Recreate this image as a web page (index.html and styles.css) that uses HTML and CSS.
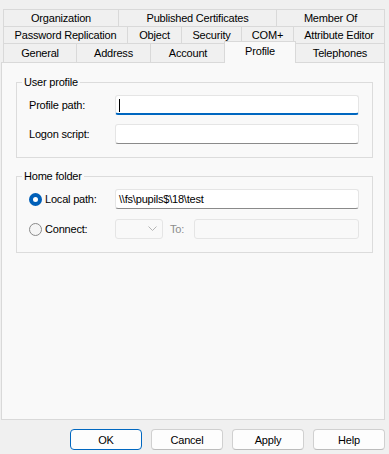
FILE: index.html
```html
<!DOCTYPE html>
<html lang="en">
<head>
    <meta charset="UTF-8">
    <title>Properties - Profile</title>
    <link rel="stylesheet" href="styles.css">
</head>
<body>
    <div class="dialog">
        <!-- Multi-row tab strip -->
        <div class="tabs">
            <div class="tab-row">
                <div class="tab tab-org">Organization</div>
                <div class="tab tab-certs">Published Certificates</div>
                <div class="tab tab-member last">Member Of</div>
            </div>
            <div class="tab-row">
                <div class="tab tab-password">Password Replication</div>
                <div class="tab tab-object">Object</div>
                <div class="tab tab-security">Security</div>
                <div class="tab tab-com">COM+</div>
                <div class="tab tab-attr last">Attribute Editor</div>
            </div>
            <div class="tab-row front">
                <div class="tab tab-general">General</div>
                <div class="tab tab-address">Address</div>
                <div class="tab tab-account">Account</div>
                <div class="tab tab-profile selected">Profile</div>
                <div class="tab tab-phones last">Telephones</div>
            </div>
        </div>

        <!-- Tab page -->
        <div class="panel">
            <fieldset class="group">
                <legend>User profile</legend>
                <div class="field-row">
                    <label class="field-label">Profile path:</label>
                    <div class="textbox focused"><span class="caret"></span></div>
                </div>
                <div class="field-row">
                    <label class="field-label">Logon script:</label>
                    <div class="textbox"></div>
                </div>
            </fieldset>

            <fieldset class="group home">
                <legend>Home folder</legend>
                <div class="field-row">
                    <label class="field-label radio-label">
                        <span class="radio checked"></span>Local path:
                    </label>
                    <div class="textbox">\\fs\pupils$\18\test</div>
                </div>
                <div class="field-row">
                    <label class="field-label radio-label">
                        <span class="radio"></span>Connect:
                    </label>
                    <div class="combo disabled">
                        <svg class="chevron" width="9" height="6" viewBox="0 0 9 6">
                            <path d="M0.5 0.5 L4.5 4.5 L8.5 0.5" fill="none" stroke="#b4b4b4" stroke-width="1"/>
                        </svg>
                    </div>
                    <span class="to-label">To:</span>
                    <div class="textbox disabled short"></div>
                </div>
            </fieldset>
        </div>

        <!-- Dialog buttons -->
        <div class="buttons">
            <button class="btn default">OK</button>
            <button class="btn">Cancel</button>
            <button class="btn">Apply</button>
            <button class="btn">Help</button>
        </div>
    </div>
</body>
</html>
```

FILE: styles.css
```css
/* Reset */
* {
    box-sizing: border-box;
    margin: 0;
    padding: 0;
}

body {
    font-family: 'Liberation Sans', Arial, sans-serif;
    font-size: 11px;
    letter-spacing: -0.2px;
    color: #000000;
    background-color: #f0f0f0;
    width: 389px;
    height: 454px;
    overflow: hidden;
}

.dialog {
    padding-top: 9px;
}

/* Tab strip */
.tabs {
    margin-left: 3px;
    width: 382px;
}

.tab-row {
    display: flex;
    height: 17px;
}

.tab-row.front {
    height: 19px;
}

.tab {
    flex: none;
    height: 100%;
    border-top: 1px solid #d9d9d9;
    border-left: 1px solid #d9d9d9;
    background-color: #f0f0f0;
    text-align: center;
    line-height: 16px;
    white-space: nowrap;
}

.tab.last {
    border-right: 1px solid #d9d9d9;
}

.tab-row.front .tab {
    line-height: 19px;
}

/* Tab widths */
.tab-org { width: 115px; }
.tab-certs { width: 158px; }
.tab-member { width: 109px; }
.tab-password { width: 124px; }
.tab-object { width: 54px; }
.tab-security { width: 60px; }
.tab-com { width: 52px; }
.tab-attr { width: 92px; }
.tab-general { width: 73px; }
.tab-address { width: 74px; }
.tab-account { width: 75px; }
.tab-profile { width: 70px; }
.tab-phones { width: 90px; }

.tab.selected {
    position: relative;
    z-index: 2;
    height: 22px;
    margin-top: -2px;
    margin-left: -1px;
    margin-right: -1px;
    width: 72px;
    border-right: 1px solid #d9d9d9;
    background-color: #f9f9f9;
    line-height: 18px;
}

/* Tab page */
.panel {
    position: relative;
    z-index: 1;
    margin-left: 1px;
    width: 384px;
    height: 358px;
    border: 1px solid #d9d9d9;
    background-color: #f9f9f9;
    padding: 12px 11px 0 14px;
}

.group {
    border: 1px solid #dcdcdc;
    padding: 6px 12px 13px 12px;
    display: flex;
    flex-direction: column;
    gap: 9px;
}

.group.home {
    margin-top: 11px;
    gap: 10px;
}

.group legend {
    margin-left: -7px;
    padding: 0 2px;
    line-height: 14px;
}

.field-row {
    display: flex;
    align-items: center;
    height: 20px;
}

.field-label {
    flex: none;
    width: 86px;
}

.radio-label {
    display: flex;
    align-items: center;
}

.radio {
    flex: none;
    width: 13px;
    height: 13px;
    border-radius: 50%;
    border: 1px solid #8a8a8a;
    background-color: #f5f5f5;
    margin-right: 3px;
}

.radio.checked {
    border: 4px solid #005fb8;
    background-color: #ffffff;
}

/* Text inputs */
.textbox {
    flex: none;
    width: 244px;
    height: 20px;
    background-color: #ffffff;
    border: 1px solid #e5e5e5;
    border-bottom-color: #8a8a8a;
    border-radius: 3px;
    padding-left: 3px;
    line-height: 18px;
    white-space: nowrap;
}

.textbox.focused {
    border-bottom: 2px solid #0067c0;
}

.caret {
    display: inline-block;
    width: 1px;
    height: 13px;
    background-color: #000000;
    vertical-align: middle;
    margin-top: -2px;
}

.textbox.disabled {
    background-color: #f9f9f9;
    border-bottom-color: #e5e5e5;
}

.textbox.short {
    width: 165px;
}

.combo {
    flex: none;
    width: 48px;
    height: 20px;
    border: 1px solid #e5e5e5;
    border-radius: 3px;
    background-color: #f9f9f9;
    display: flex;
    align-items: center;
    justify-content: flex-end;
    padding-right: 5px;
}

.to-label {
    color: #8c8c8c;
    width: 31px;
    padding-left: 7px;
}

/* Buttons */
.buttons {
    display: flex;
    justify-content: flex-end;
    gap: 9px;
    margin-top: 9px;
    padding-right: 4px;
}

.btn {
    width: 72px;
    height: 21px;
    font-family: inherit;
    font-size: 11px;
    letter-spacing: -0.2px;
    color: #000000;
    background-color: #fdfdfd;
    border: 1px solid #d0d0d0;
    border-bottom-color: #bcbcbc;
    border-radius: 4px;
}

.btn.default {
    border-color: #0067c0;
}
```
